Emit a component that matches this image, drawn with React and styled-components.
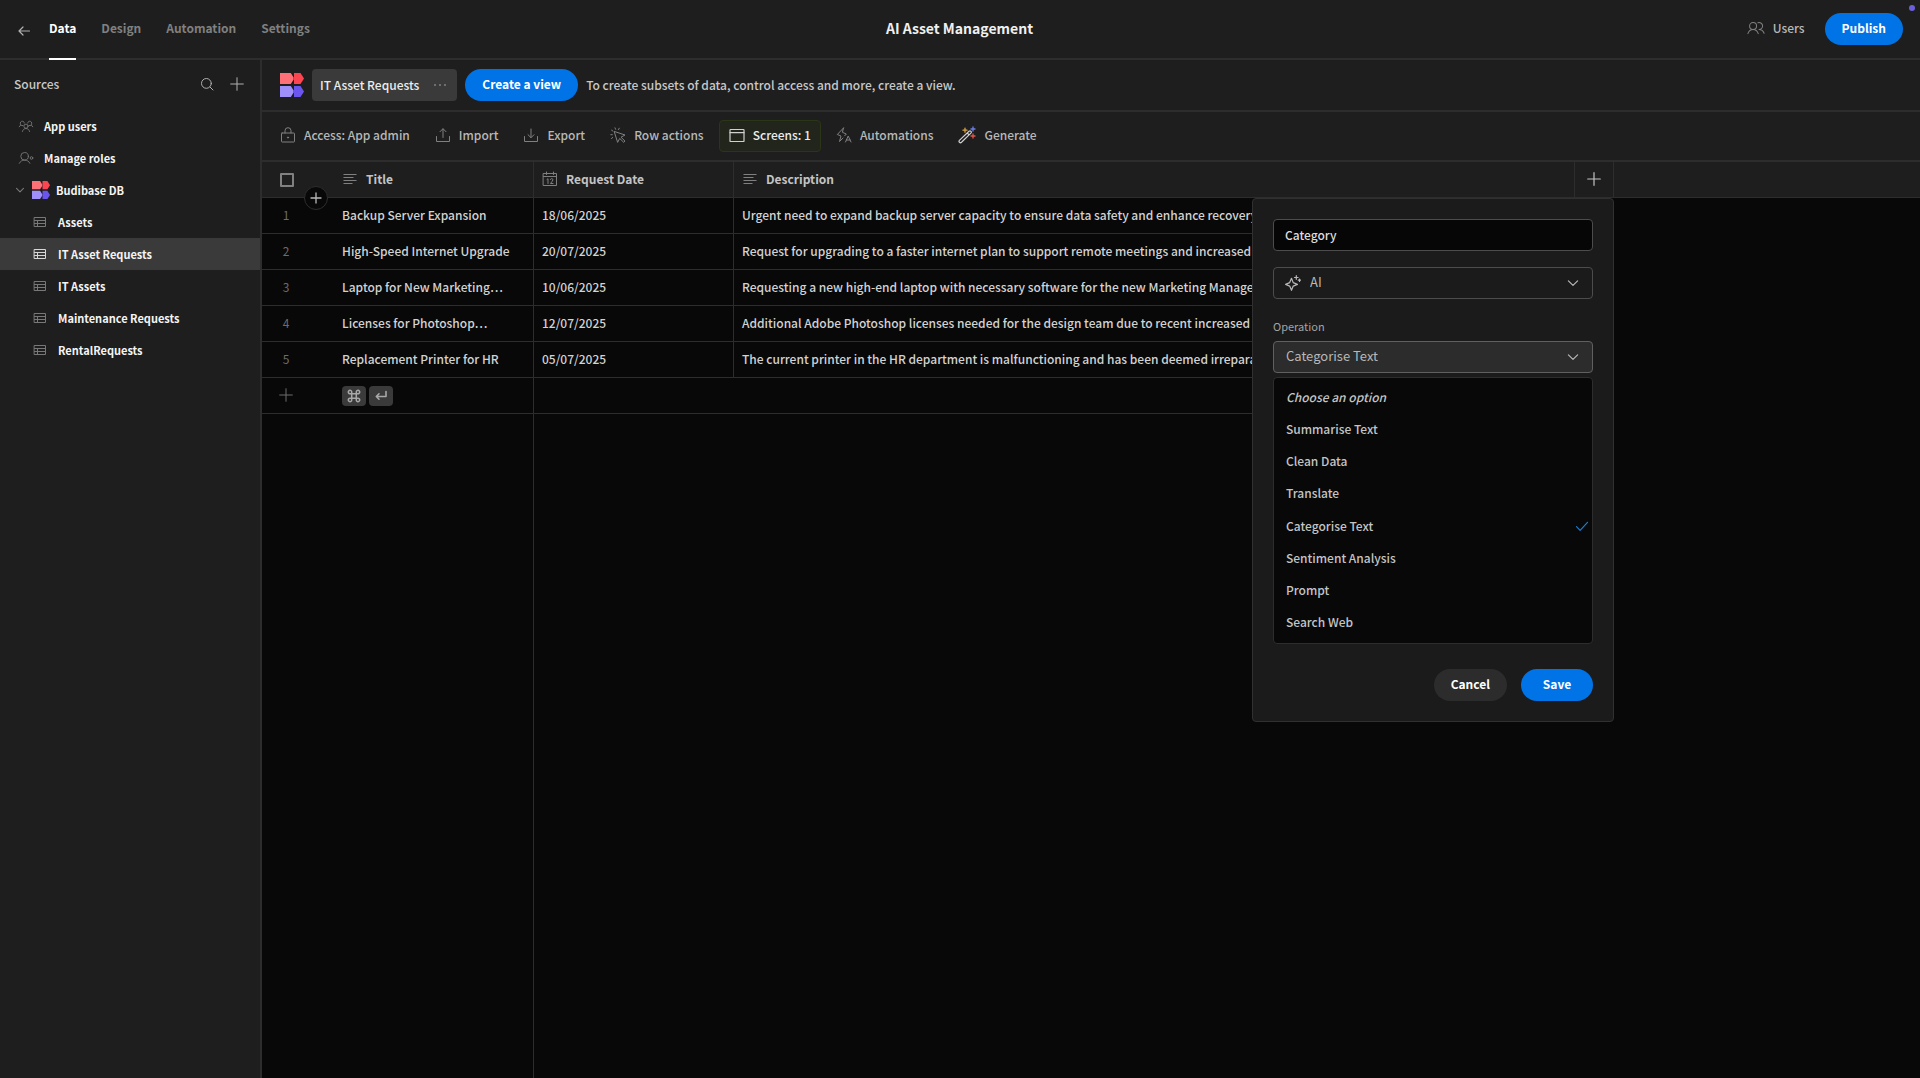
import React from "react";
import styled, { createGlobalStyle, css, ThemeProvider } from "styled-components";

const theme = {
    colors: {
        panel: "#1e1e1e",
        popover: "#1b1b1b",
        base: "#080808",
        line: "#2d2d2d",
        selected: "#3a3a3a",
        button: "#2c2c2c",
        blue: "#0073e6",
        white: "#ffffff",
        text: "#d2d2d2",
        soft: "#b8b8b8",
        muted: "#808080",
    },
};

const GlobalStyle = createGlobalStyle`
    *, *::before, *::after {
        box-sizing: border-box;
    }
    body {
        margin: 0;
        background: #080808;
    }
    body, button, input, select, table {
        font-family: "Noto Sans CJK SC", "Noto Sans", sans-serif;
        font-size: 12px;
        line-height: 18px;
    }
    button {
        margin: 0;
        padding: 0;
        border: 0;
        background: none;
        color: inherit;
        cursor: pointer;
    }
    a {
        color: inherit;
        text-decoration: none;
    }
    svg {
        display: block;
        flex: none;
    }
`;

/* ---------- icons ---------- */

const Icon = ({ size = 16, width = 1, children }) => (
    <svg
        width={size}
        height={size}
        viewBox="0 0 16 16"
        fill="none"
        stroke="currentColor"
        strokeWidth={width}
        strokeLinecap="round"
        strokeLinejoin="round"
        aria-hidden="true"
    >
        {children}
    </svg>
);

const BackIcon = () => (
    <Icon width={1.2}>
        <path d="M13.5 8H3M7 4 3 8l4 4" />
    </Icon>
);

const SearchIcon = () => (
    <Icon>
        <circle cx="7.4" cy="7.4" r="4.9" />
        <path d="m11 11 3 3" />
    </Icon>
);

const PlusIcon = ({ width = 1.2 }) => (
    <Icon width={width}>
        <path d="M8 1.7v12.6M1.7 8h12.6" />
    </Icon>
);

const SmallPlusIcon = () => (
    <Icon width={1.3}>
        <path d="M8 3v10M3 8h10" />
    </Icon>
);

const UsersIcon = ({ size = 18 }) => (
    <Icon size={size} width={0.9}>
        <circle cx="5.4" cy="6.2" r="3.1" />
        <path d="M.8 13c.8-2.2 2.5-3.6 4.6-3.6s3.8 1.4 4.6 3.6M9.7 3.3a3.1 3.1 0 1 1 1 6c2.1 0 3.7 1.3 4.5 3.4" />
    </Icon>
);

const UserGroupIcon = () => (
    <Icon width={0.9}>
        <circle cx="8" cy="8.2" r="2.1" />
        <path d="M4.4 13.5c.5-1.9 1.8-3 3.6-3s3.1 1.1 3.6 3M5 7.6C3.3 7.8 2 7 2.3 5.1 2.5 3.5 4 2.8 5.3 3.5c.6.3 1 .8 1 1.5M2.5 7.3 1.2 8.8M11 7.6c1.7.2 3-.6 2.7-2.5-.2-1.6-1.7-2.3-3-1.6-.6.3-1 .8-1 1.5M13.5 7.3l1.3 1.5" />
    </Icon>
);

const UserRoleIcon = () => (
    <Icon width={0.9}>
        <circle cx="6.6" cy="6.3" r="3.8" />
        <path d="M1.3 13.3c1-2 2.8-3.2 5.3-3.2s4.3 1.2 5.3 3.2" />
        <circle cx="13.5" cy="8" r="1.3" />
    </Icon>
);

const ChevronIcon = ({ size = 16, width = 1.2 }) => (
    <Icon size={size} width={width}>
        <path d="m3.4 5.9 4.6 4.5 4.6-4.5" />
    </Icon>
);

const TableIcon = () => (
    <Icon>
        <path d="M2.5 3.5h11v9h-11zM2.5 6.5h11M2.5 9.5h11M5.5 6.5v6" />
    </Icon>
);

const DotsIcon = () => (
    <Icon>
        <g fill="currentColor" stroke="none">
            <circle cx="3" cy="8" r="1" />
            <circle cx="8" cy="8" r="1" />
            <circle cx="13" cy="8" r="1" />
        </g>
    </Icon>
);

const LockIcon = () => (
    <Icon>
        <rect x="1.5" y="6" width="13" height="9" rx="0.6" />
        <path d="M5 6V3.7a3 3 0 0 1 6 0V6" />
        <circle cx="8" cy="10.5" r="0.6" fill="currentColor" />
    </Icon>
);

const ImportIcon = () => (
    <Icon>
        <path d="M1.5 9.5v5h13v-5M8 10.500V2M5 4.700 8 1.700l3 3" />
    </Icon>
);

const ExportIcon = () => (
    <Icon>
        <path d="M1.5 9.5v5h13v-5M8 2v8.500M5 7.700l3 3 3-3" />
    </Icon>
);

const RowActionsIcon = () => (
    <Icon>
        <path d="M4.5 4.5 15 8l-4 2.2 4 3.9-1.3 1.2-4-3.9L7.8 15Z" />
        <path d="M.8 7.7h1.5M1.6 3.2l1.2.8M5 .8l.6 1.5M9.3 1.2l-.8 1.4M1.5 11.5l1.2-1" />
    </Icon>
);

const ScreenIcon = () => (
    <Icon width={1.2}>
        <rect x="1" y="2.5" width="14" height="12" rx="0.6" />
        <path d="M1 5.7h14" />
    </Icon>
);

const AutomationsIcon = () => (
    <Icon>
        <path d="M7.5 1 1.3 7.5 5 9l-1.5 5.5L7 11M7.5 1 6.4 5.3 10.3 7 8.7 8.8" />
        <path d="m9.5 15 2.7-6 2.8 6M10.4 13h3.7" />
    </Icon>
);

const WandIcon = () => (
    <svg width="18" height="18" viewBox="0 0 18 18" fill="none" strokeLinecap="round" strokeLinejoin="round" aria-hidden="true">
        <path d="M1.4 14.4 11 5.2q1-.8 1.9 0t0 1.9L3.5 16.3q-1 .9-2 0t-.1-1.9ZM9.2 7l1.9 1.9" stroke="#cfcfcf" strokeWidth="1.2" />
        <path d="M7 2.2v4M5 4.2h4" stroke="#d9a441" strokeWidth="1.3" />
        <path d="M15 1v4M13 3h4" stroke="#6f7fe8" strokeWidth="1.3" />
        <path d="M15 8v4M13 10h4" stroke="#e2574c" strokeWidth="1.3" />
    </svg>
);

const TextIcon = () => (
    <Icon>
        <path d="M1.5 3.5h13M1.5 6.5h10M1.5 9.5h13M1.5 12.5h9" strokeLinecap="butt" />
    </Icon>
);

const CalendarIcon = () => (
    <Icon>
        <path d="M1.5 2.5h13v12h-13zM1.5 5.5h13M4.5 1v2.5M11.5 1v2.5M5 8.5l1-.8v4.8M8.5 8.5q.2-.9 1.2-.9 1.2 0 1.2 1.2 0 .8-2.4 3.7h2.5" />
    </Icon>
);

const SparkleIcon = () => (
    <Icon width={1.2}>
        <path d="M6.5 3.3 8.2 7.6l4.2 1.8-4.2 1.7-1.7 4.2-1.8-4.2L.6 9.4l4.1-1.8ZM11.3.7v3.6M9.5 2.5h3.6M14.5 4v2.4M13.3 5.2h2.4" />
    </Icon>
);

const CheckIcon = () => (
    <Icon width={1.2}>
        <path d="m2.5 8.7 3.6 3.6 7.4-8" />
    </Icon>
);

const CommandIcon = () => (
    <Icon width={1.5}>
        <path d="M5.7 5.7h4.6v4.6H5.7zM5.7 5.7H4.2a1.7 1.7 0 1 1 1.5-1.7ZM10.3 5.7V4a1.7 1.7 0 1 1 1.5 1.7ZM10.3 10.3h1.5a1.7 1.7 0 1 1-1.5 1.7ZM5.7 10.3V12a1.7 1.7 0 1 1-1.5-1.7Z" />
    </Icon>
);

const ReturnIcon = () => (
    <Icon width={1.6}>
        <path d="M13 3.5v5H3.5M6 5.8 3.3 8.5 6 11.2" />
    </Icon>
);

const Logo = ({ size = 24 }) => (
    <svg width={size} height={size} viewBox="0 0 24 24" role="img" aria-label="Budibase">
        <path fill="#ff7077" d="M0 0h10.8l2.8 4.5v2L10.8 11H0Z" />
        <path fill="#fb4652" d="M14 0h6.5L24 5.5 20.5 11H14Z" />
        <path fill="#9f8ffb" d="M0 13h10.8l2.8 4.5v2L10.8 24H0Z" />
        <path fill="#6a55ef" d="M14 13h6.5l3.5 5.5-3.5 5.5H14Z" />
    </svg>
);

/* ---------- shell ---------- */

const Page = styled.div`
    display: flex;
    flex-direction: column;
    min-height: 100vh;
    background: ${(props) => props.theme.colors.base};
    color: ${(props) => props.theme.colors.text};
`;

const TopBar = styled.header`
    display: grid;
    grid-template-columns: 1fr auto 1fr;
    height: 60px;
    padding: 0 17px 0 16px;
    background: ${(props) => props.theme.colors.panel};
    border-bottom: 2px solid ${(props) => props.theme.colors.line};
    position: relative;

    h1 {
        margin: 0;
        font-size: 14px;
        line-height: 56px;
        font-weight: 600;
        color: #f0f0f0;
    }
`;

const Nav = styled.nav`
    display: flex;
    align-items: center;
    gap: 25px;

    button {
        margin: 2px -8px 0 0;
        color: #b0b0b0;
    }
`;

const NavLink = styled.a`
    height: 60px;
    line-height: 56px;
    align-self: flex-start;
    font-weight: 600;
    color: ${(props) => (props.$active ? props.theme.colors.white : props.theme.colors.muted)};
    border-bottom: 2px solid ${(props) => (props.$active ? props.theme.colors.white : "transparent")};
`;

const TopActions = styled.div`
    display: flex;
    justify-content: flex-end;
    align-items: center;
    gap: 20px;
    height: 58px;
`;

const UsersLink = styled.a`
    display: flex;
    align-items: center;
    gap: 8px;
    padding-bottom: 2px;
    font-weight: 500;
    color: ${(props) => props.theme.colors.soft};

    svg {
        color: ${(props) => props.theme.colors.muted};
    }
`;

const Dot = styled.span`
    position: absolute;
    top: 5px;
    right: 5px;
    width: 6px;
    height: 6px;
    border-radius: 50%;
    background: #6a5fd8;
`;

const PillButton = styled.button`
    height: 32px;
    padding: 0 17px 2px;
    border-radius: 16px;
    font-weight: 700;
    white-space: nowrap;
    min-width: ${(props) => (props.$wide ? "72px" : "0")};
    color: ${(props) => props.theme.colors.white};
    background: ${(props) => (props.$quiet ? props.theme.colors.button : props.theme.colors.blue)};
`;

const Body = styled.div`
    display: flex;
    flex: 1;
`;

/* ---------- sidebar ---------- */

const SideBar = styled.aside`
    flex: 0 0 262px;
    background: ${(props) => props.theme.colors.panel};
    border-right: 2px solid ${(props) => props.theme.colors.line};
`;

const SideHead = styled.div`
    display: flex;
    align-items: center;
    gap: 14px;
    height: 50px;
    padding: 0 15px 2px 14px;
    color: #b0b0b0;

    h2 {
        flex: 1;
        margin: 0;
        font-size: 12px;
        font-weight: 500;
        color: #c8c8c8;
    }
`;

const indents = { top: "18px", db: "14px", table: "32px" };

const SideLink = styled.a`
    display: flex;
    align-items: center;
    gap: ${(props) => (props.$level === "db" ? "6px" : "10px")};
    height: 32px;
    padding-left: ${(props) => indents[props.$level]};
    font-size: 11px;
    font-weight: 600;
    color: #f4f4f4;
    background: ${(props) => (props.$active ? props.theme.colors.selected : "transparent")};

    svg {
        color: ${(props) => (props.$active ? "#d8d8d8" : "#787878")};
    }
`;

/* ---------- main column ---------- */

const Main = styled.main`
    flex: 1;
    min-width: 0;
    display: flex;
    flex-direction: column;
`;

const ViewBar = styled.div`
    display: flex;
    align-items: center;
    gap: 8px;
    height: 52px;
    padding: 0 18px;
    background: ${(props) => props.theme.colors.panel};
    border-bottom: 2px solid ${(props) => props.theme.colors.line};

    p {
        margin: 0;
        font-weight: 500;
        color: #c8c8c8;
    }
`;

const ViewTab = styled.div`
    display: flex;
    align-items: center;
    gap: 13px;
    height: 32px;
    padding: 0 9px 0 8px;
    border-radius: 4px;
    font-weight: 500;
    color: #ececec;
    background: ${(props) => props.theme.colors.selected};

    button {
        color: ${(props) => props.theme.colors.muted};
    }
`;

const ToolBar = styled.div`
    display: flex;
    align-items: center;
    gap: 5px;
    height: 50px;
    padding: 0 8px;
    background: ${(props) => props.theme.colors.panel};
    border-bottom: 2px solid ${(props) => props.theme.colors.line};
`;

const ToolButton = styled.button`
    display: flex;
    align-items: center;
    gap: 8px;
    height: 32px;
    padding: 0 9px 2px;
    border: 1px solid transparent;
    border-radius: 4px;
    font-weight: 500;
    color: ${(props) => props.theme.colors.soft};

    svg {
        color: ${(props) => props.theme.colors.muted};
    }

    ${(props) =>
        props.$active &&
        css`
            color: #ececec;
            background: #21251b;
            border-color: #2b3518;

            svg {
                color: #d0d0d0;
            }
        `}
`;

/* ---------- grid ---------- */

const GridArea = styled.section`
    flex: 1;
    display: flex;
    flex-direction: column;
    position: relative;
`;

const Table = styled.table`
    width: 100%;
    table-layout: fixed;
    border-collapse: separate;
    border-spacing: 0;

    col.gutter { width: 72px; }
    col.title { width: 200px; }
    col.date { width: 200px; }
    col.description { width: 841px; }
    col.add { width: 39px; }
`;

const HeadCell = styled.th`
    height: 36px;
    padding: 0 8px 2px;
    background: ${(props) => props.theme.colors.panel};
    border-bottom: 1px solid ${(props) => props.theme.colors.line};
    border-right: ${(props) => (props.$open ? "0" : `1px solid ${props.theme.colors.line}`)};
    font-weight: 600;
    color: #c4c4c4;
    text-align: left;

    div {
        display: flex;
        align-items: center;
        gap: 8px;
    }
    div svg {
        color: ${(props) => props.theme.colors.muted};
    }
    button {
        display: block;
        margin: 0 auto;
    }
`;

const GutterHead = styled(HeadCell)`
    padding: 0 0 0 18px;
    border-right: 0;
`;

const CheckBox = styled.input`
    appearance: none;
    display: block;
    width: 14px;
    height: 14px;
    margin: 0;
    border: 2px solid #808080;
    border-radius: 1px;
`;

const Cell = styled.td`
    height: 36px;
    padding: 0 8px 2px;
    border-bottom: 1px solid ${(props) => props.theme.colors.line};
    border-right: ${(props) => (props.$open ? "0" : `1px solid ${props.theme.colors.line}`)};
    font-weight: 500;
    color: ${(props) => props.theme.colors.text};
    white-space: nowrap;
    overflow: hidden;
    text-overflow: ellipsis;
`;

const GutterCell = styled(Cell)`
    padding: 0 24px 2px 0;
    border-right: 0;
    font-weight: 400;
    color: #6c6c6c;
    text-align: center;

    button {
        display: block;
        margin: 0 auto;
    }
`;

const Keys = styled.div`
    display: flex;
    gap: 3px;
    padding-top: 2px;
`;

const Key = styled.kbd`
    display: grid;
    place-items: center;
    width: 24px;
    height: 20px;
    border-radius: 4px;
    background: ${(props) => props.theme.colors.selected};
    color: #a8a8a8;
`;

const StickyFill = styled.div`
    flex: 1;
    width: 272px;
    border-right: 1px solid ${(props) => props.theme.colors.line};
`;

const InsertButton = styled.button`
    position: absolute;
    top: 24px;
    left: 42px;
    display: grid;
    place-items: center;
    width: 24px;
    height: 24px;
    border: 1px solid ${(props) => props.theme.colors.line};
    border-radius: 50%;
    background: ${(props) => props.theme.colors.base};
    color: ${(props) => props.theme.colors.soft};
`;

/* ---------- column editor ---------- */

const Popover = styled.form`
    position: absolute;
    top: 36px;
    left: 990px;
    width: 362px;
    padding: 20px;
    display: flex;
    flex-direction: column;
    background: ${(props) => props.theme.colors.popover};
    border: 1px solid #303030;
    border-radius: 4px;
`;

const NameInput = styled.input`
    width: 100%;
    height: 32px;
    padding: 0 11px 2px;
    border: 1px solid #4c4c4c;
    border-radius: 4px;
    outline: 0;
    background: #060606;
    color: #dcdcdc;
    font-weight: 500;
`;

const SelectBox = styled.div`
    position: relative;
    color: ${(props) => props.theme.colors.soft};

    select {
        appearance: none;
        display: block;
        width: 100%;
        height: 32px;
        padding: 0 32px 2px ${(props) => (props.$icon ? "36px" : "12px")};
        border: 1px solid ${(props) => (props.$open ? "#606060" : "#4c4c4c")};
        border-radius: 4px;
        outline: 0;
        background: ${(props) => (props.$open ? props.theme.colors.button : "transparent")};
        color: inherit;
        font-size: 13px;
    }
    svg {
        position: absolute;
        top: 8px;
        pointer-events: none;
    }
    svg:first-child {
        left: 12px;
    }
    svg:last-child {
        right: 12px;
    }
`;

const NameField = styled.div`
    margin-bottom: 16px;
`;

const Label = styled.label`
    margin: 18px 0 6px;
    font-size: 11px;
    color: #a4a4a4;
`;

const Options = styled.ul`
    margin: 4px 0 25px;
    padding: 3px 0 5px;
    list-style: none;
    background: ${(props) => props.theme.colors.base};
    border: 1px solid ${(props) => props.theme.colors.line};
    border-radius: 4px;
`;

const Option = styled.li`
    display: flex;
    align-items: center;
    justify-content: space-between;
    height: ${(props) => (props["aria-selected"] ? "33px" : "32px")};
    padding: 0 2px 0 12px;
    font-weight: 500;
    font-style: ${(props) => (props.$placeholder ? "italic" : "normal")};
    color: #c4c4c4;

    svg {
        color: #1a7fd4;
    }
`;

const Footer = styled.div`
    display: flex;
    justify-content: flex-end;
    gap: 14px;
`;

/* ---------- data ---------- */

const tabs = ["Data", "Design", "Automation", "Settings"];

const tables = ["Assets", "IT Asset Requests", "IT Assets", "Maintenance Requests", "RentalRequests"];

const tools = [
    { label: "Access: App admin", icon: <LockIcon /> },
    { label: "Import", icon: <ImportIcon /> },
    { label: "Export", icon: <ExportIcon /> },
    { label: "Row actions", icon: <RowActionsIcon /> },
    { label: "Screens: 1", icon: <ScreenIcon />, active: true },
    { label: "Automations", icon: <AutomationsIcon /> },
    { label: "Generate", icon: <WandIcon /> },
];

const rows = [
    {
        title: "Backup Server Expansion",
        date: "18/06/2025",
        description: "Urgent need to expand backup server capacity to ensure data safety and enhance recovery",
    },
    {
        title: "High-Speed Internet Upgrade",
        date: "20/07/2025",
        description: "Request for upgrading to a faster internet plan to support remote meetings and increased",
    },
    {
        title: "Laptop for New Marketing…",
        date: "10/06/2025",
        description: "Requesting a new high-end laptop with necessary software for the new Marketing Manager",
    },
    {
        title: "Licenses for Photoshop…",
        date: "12/07/2025",
        description: "Additional Adobe Photoshop licenses needed for the design team due to recent increased",
    },
    {
        title: "Replacement Printer for HR",
        date: "05/07/2025",
        description: "The current printer in the HR department is malfunctioning and has been deemed irreparable",
    },
];

const operations = [
    "Summarise Text",
    "Clean Data",
    "Translate",
    "Categorise Text",
    "Sentiment Analysis",
    "Prompt",
    "Search Web",
];

const ColumnEditor = () => {
    const [operation, setOperation] = React.useState("Categorise Text");

    return (
        <Popover onSubmit={(e) => e.preventDefault()}>
            <NameField>
                <NameInput aria-label="Column name" defaultValue="Category" />
            </NameField>
            <SelectBox $icon>
                <SparkleIcon />
                <select aria-label="Column type" defaultValue="AI">
                    <option>AI</option>
                </select>
                <ChevronIcon />
            </SelectBox>
            <Label htmlFor="operation">Operation</Label>
            <SelectBox $open>
                <select id="operation" value={operation} onChange={(e) => setOperation(e.target.value)}>
                    {operations.map((name) => (
                        <option key={name}>{name}</option>
                    ))}
                </select>
                <ChevronIcon />
            </SelectBox>
            <Options role="listbox" aria-label="Operation">
                <Option role="option" $placeholder>Choose an option</Option>
                {operations.map((name) => (
                    <Option
                        key={name}
                        role="option"
                        aria-selected={name === operation}
                        onClick={() => setOperation(name)}
                    >
                        {name}
                        {name === operation && <CheckIcon />}
                    </Option>
                ))}
            </Options>
            <Footer>
                <PillButton type="button" $quiet>Cancel</PillButton>
                <PillButton type="submit" $wide>Save</PillButton>
            </Footer>
        </Popover>
    );
};

const DataGrid = () => (
    <GridArea>
        <Table>
            <colgroup>
                <col className="gutter" />
                <col className="title" />
                <col className="date" />
                <col className="description" />
                <col className="add" />
                <col />
            </colgroup>
            <thead>
                <tr>
                    <GutterHead>
                        <CheckBox type="checkbox" aria-label="Select all rows" />
                    </GutterHead>
                    <HeadCell><div><TextIcon />Title</div></HeadCell>
                    <HeadCell><div><CalendarIcon />Request Date</div></HeadCell>
                    <HeadCell><div><TextIcon />Description</div></HeadCell>
                    <HeadCell>
                        <button type="button" aria-label="Add column"><PlusIcon /></button>
                    </HeadCell>
                    <HeadCell $open />
                </tr>
            </thead>
            <tbody>
                {rows.map((row, i) => (
                    <tr key={row.title}>
                        <GutterCell>{i + 1}</GutterCell>
                        <Cell>{row.title}</Cell>
                        <Cell>{row.date}</Cell>
                        <Cell>{row.description}</Cell>
                    </tr>
                ))}
                <tr>
                    <GutterCell>
                        <button type="button" aria-label="Add row"><PlusIcon width={1} /></button>
                    </GutterCell>
                    <Cell>
                        <Keys>
                            <Key><CommandIcon /></Key>
                            <Key><ReturnIcon /></Key>
                        </Keys>
                    </Cell>
                    <Cell $open />
                    <Cell $open />
                </tr>
            </tbody>
        </Table>
        <StickyFill />
        <InsertButton type="button" aria-label="Insert row"><SmallPlusIcon /></InsertButton>
        <ColumnEditor />
    </GridArea>
);

const App = () => (
    <ThemeProvider theme={theme}>
        <GlobalStyle />
        <Page>
            <TopBar>
                <Nav>
                    <button type="button" aria-label="Back"><BackIcon /></button>
                    {tabs.map((tab) => (
                        <NavLink key={tab} href="#" $active={tab === "Data"}>{tab}</NavLink>
                    ))}
                </Nav>
                <h1>AI Asset Management</h1>
                <TopActions>
                    <UsersLink href="#"><UsersIcon />Users</UsersLink>
                    <PillButton type="button">Publish</PillButton>
                </TopActions>
                <Dot />
            </TopBar>
            <Body>
                <SideBar>
                    <SideHead>
                        <h2>Sources</h2>
                        <button type="button" aria-label="Search"><SearchIcon /></button>
                        <button type="button" aria-label="Add source"><PlusIcon width={1} /></button>
                    </SideHead>
                    <nav>
                        <SideLink href="#" $level="top"><UserGroupIcon />App users</SideLink>
                        <SideLink href="#" $level="top"><UserRoleIcon />Manage roles</SideLink>
                        <SideLink href="#" $level="db"><ChevronIcon size={12} width={1.5} /><Logo size={18} />Budibase DB</SideLink>
                        {tables.map((name) => (
                            <SideLink key={name} href="#" $level="table" $active={name === "IT Asset Requests"}>
                                <TableIcon />
                                {name}
                            </SideLink>
                        ))}
                    </nav>
                </SideBar>
                <Main>
                    <ViewBar>
                        <Logo />
                        <ViewTab>
                            <a href="#">IT Asset Requests</a>
                            <button type="button" aria-label="Table options"><DotsIcon /></button>
                        </ViewTab>
                        <PillButton type="button">Create a view</PillButton>
                        <p>To create subsets of data, control access and more, create a view.</p>
                    </ViewBar>
                    <ToolBar>
                        {tools.map((tool) => (
                            <ToolButton key={tool.label} type="button" $active={tool.active}>
                                {tool.icon}
                                {tool.label}
                            </ToolButton>
                        ))}
                    </ToolBar>
                    <DataGrid />
                </Main>
            </Body>
        </Page>
    </ThemeProvider>
);

export default App;
